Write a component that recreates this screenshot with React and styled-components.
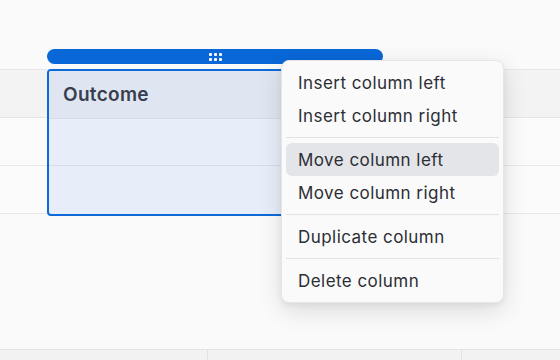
import React from "react";
import styled, { createGlobalStyle } from "styled-components";

const GlobalStyle = createGlobalStyle`
  html, body {
    margin: 0;
    padding: 0;
    background: #fafafa;
  }
  body {
    font-family: Inter, "Noto Sans", "Liberation Sans", sans-serif;
    -webkit-font-smoothing: antialiased;
  }
`;

const Page = styled.div`
  position: relative;
  width: 560px;
  height: 360px;
  overflow: hidden;
  background: #fafafa;
  padding-top: 69px;
  box-sizing: border-box;
`;

const Table = styled.div`
  display: grid;
  grid-template-columns: 47px 336px 1fr;
  align-items: start;
`;

const Column = styled.div`
  display: flex;
  flex-direction: column;
  border-top: 1px solid #e7e7e9;
`;

const HeaderCell = styled.div`
  height: 48px;
  background: #f3f3f4;
  border-bottom: 1px solid #e5e5e8;
  box-sizing: border-box;
`;

const Cell = styled.div`
  height: 48px;
  background: #fbfbfb;
  border-bottom: 1px solid #e8e8ea;
  box-sizing: border-box;
`;

const SelectedColumn = styled.div`
  position: relative;
  display: flex;
  flex-direction: column;
  border: 2px solid #0e6ad8;
  border-radius: 4px;
  background: #e7eef9;
  height: 147px;
  box-sizing: border-box;
`;

const SelectedHeader = styled.div`
  height: 48px;
  display: flex;
  align-items: center;
  padding-left: 14px;
  background: #dfe6f1;
  border-bottom: 1px solid #d5dce8;
  border-radius: 2px 2px 0 0;
  box-sizing: border-box;
  font-size: 19px;
  font-weight: 600;
  letter-spacing: 0.3px;
  color: #383e50;
`;

const SelectedCell = styled.div`
  height: 48px;
  border-bottom: ${(p) => (p.$last ? "none" : "1px solid #d6dde9")};
  box-sizing: border-box;
`;

const Handle = styled.div`
  position: absolute;
  left: -2px;
  right: -2px;
  top: -22px;
  height: 15px;
  border-radius: 8px;
  background: #0a67d7;
  display: flex;
  align-items: center;
  justify-content: center;
`;

const Dots = styled.div`
  display: grid;
  grid-template-columns: repeat(3, 3px);
  grid-auto-rows: 3px;
  gap: 2px 2px;
`;

const Dot = styled.span`
  width: 3px;
  height: 3px;
  border-radius: 1px;
  background: #ffffff;
`;

const BottomTable = styled.div`
  display: grid;
  grid-template-columns: 207px 254px 1fr;
  margin-top: 133px;
  border-top: 1px solid #e4e4e8;
`;

const BottomCell = styled.div`
  height: 40px;
  background: #f2f2f3;
  border-left: ${(p) => (p.$first ? "none" : "1px solid #e2e2e5")};
`;

const Menu = styled.div`
  position: absolute;
  left: 281px;
  top: 60px;
  width: 223px;
  box-sizing: border-box;
  padding: 5px 4px 5px;
  background: #fafafa;
  border: 1px solid #e6e6e9;
  border-radius: 8px;
  box-shadow: 0 8px 24px rgba(0, 0, 0, 0.12), 0 2px 6px rgba(0, 0, 0, 0.06);
  display: flex;
  flex-direction: column;
`;

const Item = styled.div`
  height: 33px;
  display: flex;
  align-items: center;
  padding: 0 12px;
  border-radius: 6px;
  font-size: 17px;
  letter-spacing: 0.45px;
  color: #2b2e35;
  background: ${(p) => (p.$active ? "#e4e5e9" : "transparent")};
  white-space: nowrap;
`;

const Separator = styled.div`
  height: 1px;
  margin: 5px 0;
  background: #e3e3e6;
`;

const menu = [
  ["Insert column left", "Insert column right"],
  ["Move column left", "Move column right"],
  ["Duplicate column"],
  ["Delete column"],
];

export default function App() {
  return (
    <>
      <GlobalStyle />
      <Page>
        <Table>
          <Column>
            <HeaderCell />
            <Cell />
            <Cell />
          </Column>
          <SelectedColumn>
            <Handle>
              <Dots>
                {Array.from({ length: 6 }).map((_, i) => (
                  <Dot key={i} />
                ))}
              </Dots>
            </Handle>
            <SelectedHeader>Outcome</SelectedHeader>
            <SelectedCell />
            <SelectedCell $last />
          </SelectedColumn>
          <Column>
            <HeaderCell />
            <Cell />
            <Cell />
          </Column>
        </Table>
        <BottomTable>
          <BottomCell $first />
          <BottomCell />
          <BottomCell />
        </BottomTable>
        <Menu>
          {menu.map((group, gi) => (
            <React.Fragment key={gi}>
              {gi > 0 && <Separator />}
              {group.map((label) => (
                <Item key={label} $active={label === "Move column left"}>
                  {label}
                </Item>
              ))}
            </React.Fragment>
          ))}
        </Menu>
      </Page>
    </>
  );
}
